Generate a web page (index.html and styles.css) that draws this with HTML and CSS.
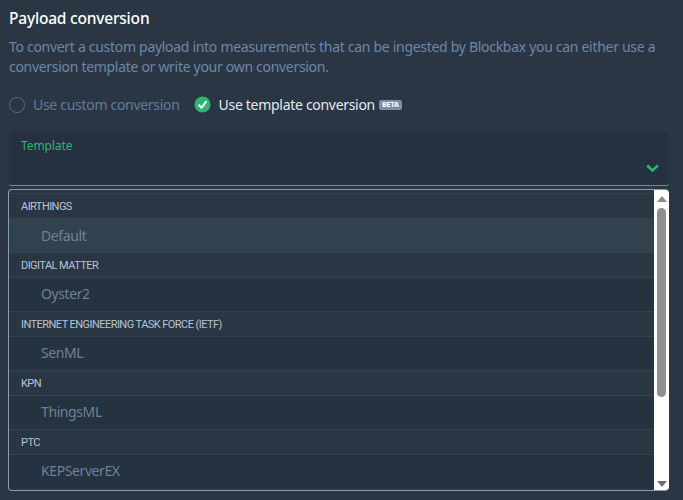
FILE: index.html
```html
<!DOCTYPE html>
<html lang="en">
<head>
  <meta charset="UTF-8">
  <title>Payload conversion</title>
  <link rel="stylesheet" href="styles.css">
</head>
<body>
  <h2 class="title">Payload conversion</h2>
  <p class="desc">To convert a custom payload into measurements that can be ingested by Blockbax you can either use a conversion template or write your own conversion.</p>

  <div class="radios">
    <label class="radio">
      <span class="radio-off"></span>
      <span>Use custom conversion</span>
    </label>
    <label class="radio radio-active">
      <svg class="radio-on" width="17" height="17" viewBox="0 0 17 17">
        <circle cx="8.5" cy="8.5" r="8" fill="#2bb673"/>
        <path d="M4.6 8.8l2.9 3 5-6.6" fill="none" stroke="#fff" stroke-width="2"/>
      </svg>
      <span>Use template conversion</span>
      <span class="beta">BETA</span>
    </label>
  </div>

  <div class="field">
    <span class="field-label">Template</span>
    <svg class="chevron" width="13" height="9" viewBox="0 0 13 9">
      <path d="M1.2 1.5l5.3 5 5.3-5" fill="none" stroke="#2bb673" stroke-width="2.6"/>
    </svg>
  </div>

  <div class="dropdown">
    <div class="options">
      <div class="group">AIRTHINGS</div>
      <div class="option option-hover">Default</div>
      <div class="group">DIGITAL MATTER</div>
      <div class="option">Oyster2</div>
      <div class="group">INTERNET ENGINEERING TASK FORCE (IETF)</div>
      <div class="option">SenML</div>
      <div class="group">KPN</div>
      <div class="option">ThingsML</div>
      <div class="group">PTC</div>
      <div class="option">KEPServerEX</div>
    </div>
    <div class="scrollbar">
      <span class="arrow-up"></span>
      <span class="thumb"></span>
      <span class="arrow-down"></span>
    </div>
  </div>
</body>
</html>
```

FILE: styles.css
```css
body {
  margin: 0;
  height: 500px;
  overflow: hidden;
  box-sizing: border-box;
  padding: 8px 14px 0 9px;
  background-color: #2b3645;
  font-family: "Noto Sans", sans-serif;
  color: #fff;
}
.title {
  margin: 0;
  font-size: 15.5px;
  line-height: 21px;
  font-weight: 500;
  letter-spacing: -0.2px;
}
.desc {
  margin: 8px 0 0;
  font-size: 14px;
  line-height: 20px;
  color: #6c87a6;
  letter-spacing: -0.3px;
}

/* Radio buttons */
.radios {
  display: flex;
  gap: 14px;
  margin-top: 17px;
  height: 21px;
}
.radio {
  display: flex;
  align-items: center;
  gap: 8px;
  font-size: 14px;
  letter-spacing: -0.3px;
  color: #5f7c9b;
}
.radio-off {
  width: 14px;
  height: 14px;
  border: 1px solid #56677a;
  border-radius: 50%;
}
.radio-active {
  color: #e4eaf0;
}
.beta {
  margin-left: -4px;
  padding: 0 3px;
  font-size: 7px;
  line-height: 10px;
  font-weight: 700;
  letter-spacing: 0;
  color: #fff;
  background-color: #7f8ea6;
  border-radius: 2px;
}

/* Select field */
.field {
  position: relative;
  height: 54px;
  margin-top: 16px;
  background-color: #253140;
  border-bottom: 1px solid #2bb673;
  border-radius: 6px 6px 2px 2px;
}
.field-label {
  display: block;
  padding: 7px 12px 0;
  font-size: 12px;
  line-height: 16px;
  letter-spacing: -0.1px;
  color: #2bb673;
}
.chevron {
  position: absolute;
  right: 10px;
  bottom: 12px;
}

/* Dropdown list */
.dropdown {
  display: flex;
  height: 300px;
  margin: 3px 0 0 -1px;
  border: 1px solid #8c9cb0;
  border-right: 0;
  border-radius: 4px;
  overflow: hidden;
  background-color: #2b3645;
}
.options {
  flex: 1;
  padding-top: 3px;
}
.group {
  height: 24px;
  padding-left: 12px;
  border-top: 1px solid #344253;
  font-family: Roboto, sans-serif;
  font-size: 11px;
  line-height: 26px;
  letter-spacing: -0.55px;
  color: #b6c4d4;
  background-color: #2b3644;
}
.option {
  height: 33px;
  padding-left: 32px;
  border-top: 1px solid #344253;
  font-size: 14px;
  line-height: 32px;
  letter-spacing: -0.4px;
  color: #6f8196;
  background-color: #253240;
}
.option-hover {
  line-height: 33px;
  background-color: #32414e;
  border-top-color: #32414e;
}

/* Scrollbar */
.scrollbar {
  display: flex;
  flex-direction: column;
  align-items: center;
  width: 15px;
  background-color: #fff;
}
.arrow-up {
  margin-top: 6px;
  border: 5px solid transparent;
  border-top: 0;
  border-bottom: 6px solid #8a8a8a;
}
.thumb {
  width: 9px;
  height: 189px;
  margin-top: 6px;
  border-radius: 5px;
  background-color: #8f8f8f;
}
.arrow-down {
  margin-top: auto;
  margin-bottom: 3px;
  border: 5px solid transparent;
  border-bottom: 0;
  border-top: 6px solid #6e6e6e;
}
```
